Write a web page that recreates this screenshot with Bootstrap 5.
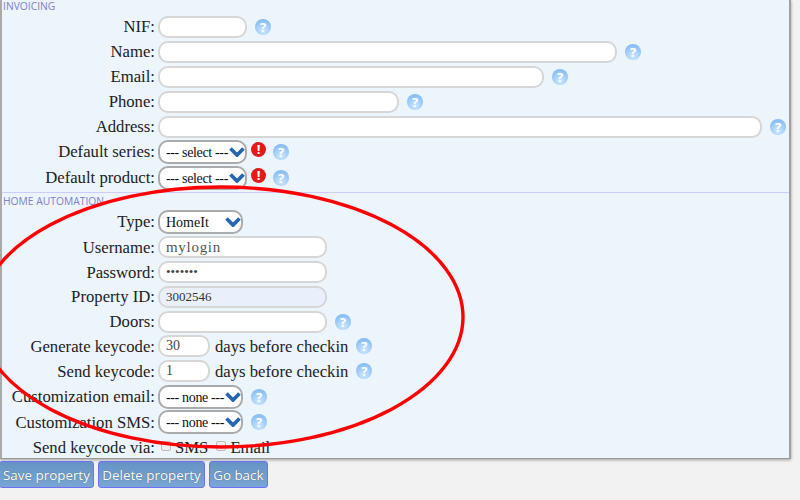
<!DOCTYPE html>
<html lang="en">
<head>
<meta charset="utf-8">
<title>Property</title>
<link href="https://cdn.jsdelivr.net/npm/bootstrap@5.3.0/dist/css/bootstrap.min.css" rel="stylesheet">
<style>
html,body{height:500px;overflow:hidden}
body{background:#f2f2f2;font-family:"Liberation Serif",serif;font-size:16.7px;color:#222;position:relative}
.sheet{width:791px;background:#ecf4fc;border-left:2px solid #a9a9a9;border-right:2px solid #a0a0a0;border-bottom:1px solid #999;box-shadow:0 1px 3px rgba(0,0,0,.35);height:459px}
.sect-title{font-family:"Open Sans",sans-serif;font-size:10.3px;line-height:11px;color:#8080cc;padding-left:1px;height:14px}
.sect-title.lead-title{padding-top:1px}
.sect-line{border-top:1px solid #ccccff;margin-top:1px;padding-top:3px}
.sect-line .sect-title{height:13px}
.frow{height:25px}
.frow.tall{height:26px}
.frow.snug{height:24.75px}
.frow.short-end{height:25.5px}
.flabel{width:153px;text-align:right;margin-right:3px;flex:none;white-space:nowrap}
.finput{height:22px;border:2px solid #d6d6d6;border-radius:10px;background:#fff;padding:0 6px;font:inherit;font-size:14px;color:#444;outline:0}
.finput.ro{background:#e9f0fb;color:#333;font-size:13px}
.finput.secret{font-size:13px}
.finput.login{font-size:15px;letter-spacing:.7px;color:#555}
.w-a{width:89px}.w-b{width:459px}.w-c{width:386px}.w-d{width:241px}.w-e{width:604px}.w-f{width:169px}.w-g{width:52px}
.fselect{appearance:none;height:24px;border:2px solid #aaa;border-radius:10px;background:#fff url("data:image/svg+xml,%3Csvg xmlns='http://www.w3.org/2000/svg' viewBox='0 0 16 10'%3E%3Cpath d='M1.5 1.5l6.5 6.5 6.5-6.5' fill='none' stroke='%232566b0' stroke-width='3.8'/%3E%3C/svg%3E") no-repeat right 0 center/16px 10px;padding:0 0 0 6px;font:inherit;font-size:14px;color:#111;outline:0}
.fselect.blank{letter-spacing:-.35px}
.s-a{width:89px}.s-b{width:85px}
.qmark{width:16px;height:16px;border-radius:50%;background:radial-gradient(circle at 50% 75%,#cfe8ff,#6fb0f2);color:#fff;font:bold 13px/16px "Open Sans",sans-serif;text-align:center;margin-left:8px;flex:none}
.bang{width:15px;height:15px;border-radius:50%;background:#e21a1a;color:#fff;font:bold 13px/15px "Open Sans",sans-serif;text-align:center;margin-left:4px;margin-top:-5px;flex:none}
.bang+.qmark{margin-left:7px}
.unit{margin-left:5px;white-space:nowrap}
.tick{width:10px;height:10px;border:1px solid #bbb;border-radius:2px;background:#eee;appearance:none;margin:-3px 4px 0 3px;flex:none}
.tick.next{margin-left:8px}
.actions{padding-top:2px;gap:4.5px;margin-left:-1px}
.act{font-family:"Open Sans",sans-serif;font-size:13.4px;line-height:18px;height:27px;padding:3px;color:#fff;border:1px solid #6f6ff5;border-radius:3px;background:linear-gradient(#6593c4,#79a6d4);text-shadow:0 0 1px #456;white-space:nowrap}
.ring{position:absolute;left:0;top:0;pointer-events:none}
</style>
</head>
<body>
<div class="sheet">
  <div class="sect-title lead-title">INVOICING</div>
  <div class="d-flex align-items-center frow"><span class="flabel">NIF:</span><input class="finput w-a"><span class="qmark">?</span></div>
  <div class="d-flex align-items-center frow"><span class="flabel">Name:</span><input class="finput w-b"><span class="qmark">?</span></div>
  <div class="d-flex align-items-center frow"><span class="flabel">Email:</span><input class="finput w-c"><span class="qmark">?</span></div>
  <div class="d-flex align-items-center frow"><span class="flabel">Phone:</span><input class="finput w-d"><span class="qmark">?</span></div>
  <div class="d-flex align-items-center frow"><span class="flabel">Address:</span><input class="finput w-e"><span class="qmark">?</span></div>
  <div class="d-flex align-items-center frow tall"><span class="flabel">Default series:</span><select class="fselect blank s-a"><option>--- select ---</option></select><span class="bang">!</span><span class="qmark">?</span></div>
  <div class="d-flex align-items-center frow tall"><span class="flabel">Default product:</span><select class="fselect blank s-a"><option>--- select ---</option></select><span class="bang">!</span><span class="qmark">?</span></div>
  <div class="sect-line"><div class="sect-title">HOME AUTOMATION</div></div>
  <div class="d-flex align-items-center frow tall"><span class="flabel">Type:</span><select class="fselect s-b"><option>HomeIt</option></select></div>
  <div class="d-flex align-items-center frow snug"><span class="flabel">Username:</span><input class="finput login w-f" value="mylogin"></div>
  <div class="d-flex align-items-center frow snug"><span class="flabel">Password:</span><input class="finput secret w-f" type="password" value="mylogin"></div>
  <div class="d-flex align-items-center frow snug"><span class="flabel">Property ID:</span><input class="finput w-f ro" value="3002546" readonly></div>
  <div class="d-flex align-items-center frow snug"><span class="flabel">Doors:</span><input class="finput w-f"><span class="qmark">?</span></div>
  <div class="d-flex align-items-center frow snug"><span class="flabel">Generate keycode:</span><input class="finput w-g" value="30"><span class="unit">days before checkin</span><span class="qmark">?</span></div>
  <div class="d-flex align-items-center frow snug"><span class="flabel">Send keycode:</span><input class="finput w-g" value="1"><span class="unit">days before checkin</span><span class="qmark">?</span></div>
  <div class="d-flex align-items-center frow tall"><span class="flabel">Customization email:</span><select class="fselect blank s-b"><option>--- none ---</option></select><span class="qmark">?</span></div>
  <div class="d-flex align-items-center frow short-end"><span class="flabel">Customization SMS:</span><select class="fselect blank s-b"><option>--- none ---</option></select><span class="qmark">?</span></div>
  <div class="d-flex align-items-center frow snug"><span class="flabel">Send keycode via:</span><input type="checkbox" class="tick"><span>SMS</span><input type="checkbox" class="tick next"><span>Email</span></div>
</div>
<div class="d-flex actions"><button class="act">Save property</button><button class="act">Delete property</button><button class="act">Go back</button></div>
<svg class="ring" width="800" height="500"><ellipse cx="221" cy="317" rx="242" ry="130" fill="none" stroke="#f00" stroke-width="3.4"/></svg>
</body>
</html>
